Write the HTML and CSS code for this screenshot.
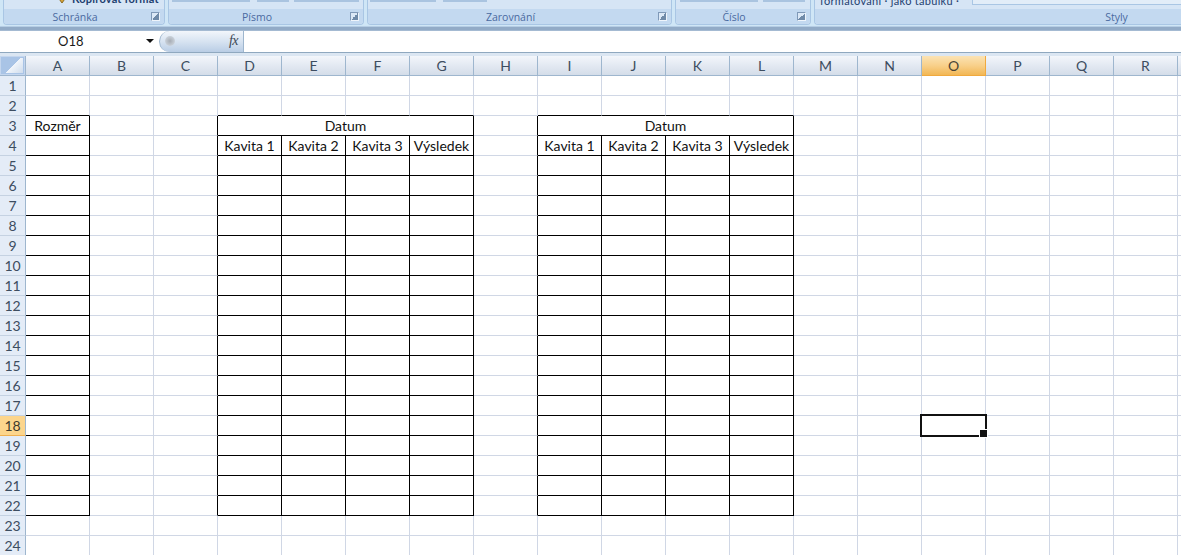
FILE: index.html
```html
<!DOCTYPE html>
<html lang="cs">
<head>
<meta charset="utf-8">
<title>Excel</title>
<link rel="stylesheet" href="styles.css">
</head>
<body>
<section class="ribbon">
  <div class="group g1">
    <div class="body"><span class="clipped kop"><svg class="brush" width="12" height="12" viewBox="0 0 12 12"><path d="M1 3 6 0l5 3-5 7z" fill="#d9a53a" stroke="#8a6a20" stroke-width="1"/></svg>Kopírovat formát</span></div>
    <div class="title"><span>Schránka</span><i class="launch"></i></div>
  </div>
  <div class="group g2">
    <div class="body"><b class="stub s1"></b><b class="stub s2"></b><b class="stub s3"></b></div>
    <div class="title"><span>Písmo</span><i class="launch"></i></div>
  </div>
  <div class="group g3">
    <div class="body"><b class="stub s4"></b><b class="stub s5"></b></div>
    <div class="title"><span>Zarovnání</span><i class="launch"></i></div>
  </div>
  <div class="group g4">
    <div class="body"><b class="stub s6"></b><b class="stub s7"></b></div>
    <div class="title"><span>Číslo</span><i class="launch"></i></div>
  </div>
  <div class="group g5">
    <div class="body"><span class="clipped fmt">formátování · jako tabulku ·</span><b class="stub s8"></b></div>
    <div class="title plain"><span>Styly</span></div>
  </div>
</section>
<div class="formula">
  <div class="name"><span>O18</span><i class="arrow"></i></div>
  <div class="oval"><i class="knob"></i><em>fx</em></div>
  <div class="input"></div>
</div>
<div class="sheet">
<table>
<thead><tr><th class="corner"><i></i></th><th>A</th><th>B</th><th>C</th><th>D</th><th>E</th><th>F</th><th>G</th><th>H</th><th>I</th><th>J</th><th>K</th><th>L</th><th>M</th><th>N</th><th class="on">O</th><th>P</th><th>Q</th><th>R</th><th></th></tr></thead>
<tbody>
<tr><th>1</th><td></td><td></td><td></td><td></td><td></td><td></td><td></td><td></td><td></td><td></td><td></td><td></td><td></td><td></td><td></td><td></td><td></td><td></td><td></td></tr>
<tr><th>2</th><td class="bb"></td><td></td><td></td><td class="bb"></td><td class="bb"></td><td class="bb"></td><td class="bb"></td><td></td><td class="bb"></td><td class="bb"></td><td class="bb"></td><td class="bb"></td><td></td><td></td><td></td><td></td><td></td><td></td><td></td></tr>
<tr><th>3</th><td class="box">Rozměr</td><td></td><td class="br"></td><td class="box" colspan="4">Datum</td><td class="br"></td><td class="box" colspan="4">Datum</td><td></td><td></td><td></td><td></td><td></td><td></td><td></td></tr>
<tr><th>4</th><td class="box"></td><td></td><td class="br"></td><td class="box">Kavita 1</td><td class="box">Kavita 2</td><td class="box">Kavita 3</td><td class="box">Výsledek</td><td class="br"></td><td class="box">Kavita 1</td><td class="box">Kavita 2</td><td class="box">Kavita 3</td><td class="box">Výsledek</td><td></td><td></td><td></td><td></td><td></td><td></td><td></td></tr>
<tr><th>5</th><td class="box"></td><td></td><td class="br"></td><td class="box"></td><td class="box"></td><td class="box"></td><td class="box"></td><td class="br"></td><td class="box"></td><td class="box"></td><td class="box"></td><td class="box"></td><td></td><td></td><td></td><td></td><td></td><td></td><td></td></tr>
<tr><th>6</th><td class="box"></td><td></td><td class="br"></td><td class="box"></td><td class="box"></td><td class="box"></td><td class="box"></td><td class="br"></td><td class="box"></td><td class="box"></td><td class="box"></td><td class="box"></td><td></td><td></td><td></td><td></td><td></td><td></td><td></td></tr>
<tr><th>7</th><td class="box"></td><td></td><td class="br"></td><td class="box"></td><td class="box"></td><td class="box"></td><td class="box"></td><td class="br"></td><td class="box"></td><td class="box"></td><td class="box"></td><td class="box"></td><td></td><td></td><td></td><td></td><td></td><td></td><td></td></tr>
<tr><th>8</th><td class="box"></td><td></td><td class="br"></td><td class="box"></td><td class="box"></td><td class="box"></td><td class="box"></td><td class="br"></td><td class="box"></td><td class="box"></td><td class="box"></td><td class="box"></td><td></td><td></td><td></td><td></td><td></td><td></td><td></td></tr>
<tr><th>9</th><td class="box"></td><td></td><td class="br"></td><td class="box"></td><td class="box"></td><td class="box"></td><td class="box"></td><td class="br"></td><td class="box"></td><td class="box"></td><td class="box"></td><td class="box"></td><td></td><td></td><td></td><td></td><td></td><td></td><td></td></tr>
<tr><th>10</th><td class="box"></td><td></td><td class="br"></td><td class="box"></td><td class="box"></td><td class="box"></td><td class="box"></td><td class="br"></td><td class="box"></td><td class="box"></td><td class="box"></td><td class="box"></td><td></td><td></td><td></td><td></td><td></td><td></td><td></td></tr>
<tr><th>11</th><td class="box"></td><td></td><td class="br"></td><td class="box"></td><td class="box"></td><td class="box"></td><td class="box"></td><td class="br"></td><td class="box"></td><td class="box"></td><td class="box"></td><td class="box"></td><td></td><td></td><td></td><td></td><td></td><td></td><td></td></tr>
<tr><th>12</th><td class="box"></td><td></td><td class="br"></td><td class="box"></td><td class="box"></td><td class="box"></td><td class="box"></td><td class="br"></td><td class="box"></td><td class="box"></td><td class="box"></td><td class="box"></td><td></td><td></td><td></td><td></td><td></td><td></td><td></td></tr>
<tr><th>13</th><td class="box"></td><td></td><td class="br"></td><td class="box"></td><td class="box"></td><td class="box"></td><td class="box"></td><td class="br"></td><td class="box"></td><td class="box"></td><td class="box"></td><td class="box"></td><td></td><td></td><td></td><td></td><td></td><td></td><td></td></tr>
<tr><th>14</th><td class="box"></td><td></td><td class="br"></td><td class="box"></td><td class="box"></td><td class="box"></td><td class="box"></td><td class="br"></td><td class="box"></td><td class="box"></td><td class="box"></td><td class="box"></td><td></td><td></td><td></td><td></td><td></td><td></td><td></td></tr>
<tr><th>15</th><td class="box"></td><td></td><td class="br"></td><td class="box"></td><td class="box"></td><td class="box"></td><td class="box"></td><td class="br"></td><td class="box"></td><td class="box"></td><td class="box"></td><td class="box"></td><td></td><td></td><td></td><td></td><td></td><td></td><td></td></tr>
<tr><th>16</th><td class="box"></td><td></td><td class="br"></td><td class="box"></td><td class="box"></td><td class="box"></td><td class="box"></td><td class="br"></td><td class="box"></td><td class="box"></td><td class="box"></td><td class="box"></td><td></td><td></td><td></td><td></td><td></td><td></td><td></td></tr>
<tr><th>17</th><td class="box"></td><td></td><td class="br"></td><td class="box"></td><td class="box"></td><td class="box"></td><td class="box"></td><td class="br"></td><td class="box"></td><td class="box"></td><td class="box"></td><td class="box"></td><td></td><td></td><td></td><td></td><td></td><td></td><td></td></tr>
<tr><th class="on">18</th><td class="box"></td><td></td><td class="br"></td><td class="box"></td><td class="box"></td><td class="box"></td><td class="box"></td><td class="br"></td><td class="box"></td><td class="box"></td><td class="box"></td><td class="box"></td><td></td><td></td><td class="active"><i class="cursor"></i></td><td></td><td></td><td></td><td></td></tr>
<tr><th>19</th><td class="box"></td><td></td><td class="br"></td><td class="box"></td><td class="box"></td><td class="box"></td><td class="box"></td><td class="br"></td><td class="box"></td><td class="box"></td><td class="box"></td><td class="box"></td><td></td><td></td><td></td><td></td><td></td><td></td><td></td></tr>
<tr><th>20</th><td class="box"></td><td></td><td class="br"></td><td class="box"></td><td class="box"></td><td class="box"></td><td class="box"></td><td class="br"></td><td class="box"></td><td class="box"></td><td class="box"></td><td class="box"></td><td></td><td></td><td></td><td></td><td></td><td></td><td></td></tr>
<tr><th>21</th><td class="box"></td><td></td><td class="br"></td><td class="box"></td><td class="box"></td><td class="box"></td><td class="box"></td><td class="br"></td><td class="box"></td><td class="box"></td><td class="box"></td><td class="box"></td><td></td><td></td><td></td><td></td><td></td><td></td><td></td></tr>
<tr><th>22</th><td class="box"></td><td></td><td class="br"></td><td class="box"></td><td class="box"></td><td class="box"></td><td class="box"></td><td class="br"></td><td class="box"></td><td class="box"></td><td class="box"></td><td class="box"></td><td></td><td></td><td></td><td></td><td></td><td></td><td></td></tr>
<tr><th>23</th><td></td><td></td><td></td><td></td><td></td><td></td><td></td><td></td><td></td><td></td><td></td><td></td><td></td><td></td><td></td><td></td><td></td><td></td><td></td></tr>
<tr><th>24</th><td></td><td></td><td></td><td></td><td></td><td></td><td></td><td></td><td></td><td></td><td></td><td></td><td></td><td></td><td></td><td></td><td></td><td></td><td></td></tr>
</tbody>
</table>
</div>
</body>
</html>
```
FILE: styles.css
```css
* { box-sizing: border-box; }
html, body { margin: 0; height: 100%; overflow: hidden; background: #fff; }
body { font-family: Lato, "Open Sans", sans-serif; width: 1181px; height: 555px; }

/* ribbon */
.ribbon {
  height: 31px;
  display: flex;
  gap: 3px;
  padding: 0 0 0 3px;
  background: linear-gradient(#cfe6f6 0 26px, #b5cde4 26px 27px, #92abc7 27px 30px, #a4bad2 30px);
  overflow: hidden;
}
.group {
  height: 25px;
  flex: none;
  display: flex;
  flex-direction: column;
  border: 1px solid #a9c6e4;
  border-top: 0;
  border-radius: 0 0 4px 4px;
  overflow: hidden;
  background: #d6e5f5;
}
.g1 { width: 162px; }
.g2 { width: 196px; }
.g3 { width: 305px; }
.g4 { width: 136px; }
.g5 { width: 604px; border-right: 0; }
.body {
  height: 9px;
  flex: none;
  display: flex;
  align-items: flex-start;
  overflow: hidden;
  position: relative;
}
.title {
  flex: 1;
  display: flex;
  justify-content: center;
  align-items: center;
  position: relative;
  padding-right: 18px;
  background: #c3d9f0;
  color: #4a6aa0;
  font-family: "Open Sans", sans-serif;
  font-size: 10.5px;
}
.title.plain { padding-right: 0; }
.launch {
  position: absolute;
  right: 4px;
  top: 3px;
  width: 9px;
  height: 9px;
  border: 1px solid #7f99b8;
  border-right-color: #eef4fb;
  border-bottom-color: #eef4fb;
  background: linear-gradient(135deg, #dbe8f6 50%, #6f8aa8 50%);
}
.clipped {
  color: #1f3f70;
  font-size: 11px;
  line-height: 12px;
  white-space: nowrap;
}
.kop { margin: -7px 0 0 52px; font-weight: 700; letter-spacing: 0.2px; display: flex; align-items: flex-start; gap: 4px; }
.fmt { margin: -5px 0 0 5px; letter-spacing: 0.3px; }
.brush { margin-top: 0; }
.stub { display: block; height: 2px; background: #aac4e0; position: absolute; top: 0; }
.s1 { left: 3px; width: 78px; }
.s2 { left: 88px; width: 32px; }
.s3 { left: 125px; width: 65px; }
.s4 { left: 2px; width: 66px; }
.s5 { left: 75px; width: 44px; }
.s6 { left: 4px; width: 78px; }
.s7 { left: 87px; width: 42px; }
.s8 { left: 157px; width: 450px; height: 5px; background: #e2edf8; border: 1px solid #a9c6e4; border-top: 0; }

/* formula bar */
.formula {
  height: 22px;
  display: flex;
  background: #fff;
  border-bottom: 1px solid #8fa8bf;
}
.name {
  width: 159px;
  flex: none;
  position: relative;
  padding-left: 58px;
  font-size: 13px;
  line-height: 20px;
  color: #1a1a1a;
}
.arrow {
  position: absolute;
  left: 146px;
  top: 8px;
  width: 0;
  height: 0;
  border: 4px solid transparent;
  border-top-color: #111;
  border-bottom: 0;
}
.oval {
  width: 85px;
  flex: none;
  position: relative;
  border-radius: 11px 0 0 11px;
  border: 1px solid #9eb6ce;
  border-top: 0;
  border-bottom: 0;
  background: linear-gradient(#f2f6fb, #d7e3f1 50%, #b9cde5);
}
.knob {
  position: absolute;
  left: 5px;
  top: 5px;
  width: 10px;
  height: 10px;
  border-radius: 50%;
  background: radial-gradient(#a6acb4, #d9e1ea);
}
.oval em {
  position: absolute;
  right: 5px;
  top: 1px;
  font: italic 400 14px/18px "Liberation Serif", serif;
  color: #3c4854;
  letter-spacing: -0.5px;
}
.input { flex: 1; }

/* sheet */
.sheet {
  height: 502px;
  overflow: hidden;
  padding-top: 3px;
  background: linear-gradient(#dbe6f2 0 3px, #fff 3px);
}
table {
  border-collapse: separate;
  border-spacing: 0;
  table-layout: fixed;
  width: 1242px;
}
th, td {
  width: 64px;
  height: 20px;
  padding: 0;
  text-align: center;
  font-size: 14px;
  line-height: 18px;
  border-right: 1px solid #d0d7e5;
  border-bottom: 1px solid #d0d7e5;
  white-space: nowrap;
}
td { color: #111; }
thead th {
  font-weight: 400;
  color: #3d4d60;
  background: linear-gradient(#f3f6fb, #e3e9f2 50%, #d4dde9);
  border-right-color: #9eb6ce;
  border-bottom-color: #9eb6ce;
}
tbody th {
  width: 26px;
  font-weight: 400;
  color: #3d4d60;
  background: #e4ecf7;
  border-right-color: #9eb6ce;
  border-bottom-color: #c5d2e2;
}
th.corner {
  width: 26px;
  padding: 1px;
  background: #c4d6ee;
  border-right-color: #9eb6ce;
}
.corner i {
  display: block;
  height: 17px;
  background: linear-gradient(135deg, #a9c4e6 50%, #f2f6fb 50%, #cfdcec);
  border: 1px solid #a9c4e6;
}
thead th.on {
  background: linear-gradient(#fbe3b4, #f8d08a 50%, #f2b755);
  border-right-color: #f0a93e;
  border-bottom-color: #f0a93e;
  color: #4a4436;
}
tbody th.on {
  background: #fcd58c;
  border-bottom-color: #f0b050;
  color: #3f3a2c;
}
.box { border-right-color: #000; border-bottom-color: #000; }
.bb { border-bottom-color: #000; }
.br { border-right-color: #000; }
.active { position: relative; }
.cursor {
  position: absolute;
  left: -2px;
  top: -2px;
  width: 67px;
  height: 23px;
  border: 2px solid #111;
}
.cursor::after {
  content: "";
  position: absolute;
  right: -3px;
  bottom: -3px;
  width: 7px;
  height: 7px;
  background: #111;
  border: 1px solid #fff;
}
```
